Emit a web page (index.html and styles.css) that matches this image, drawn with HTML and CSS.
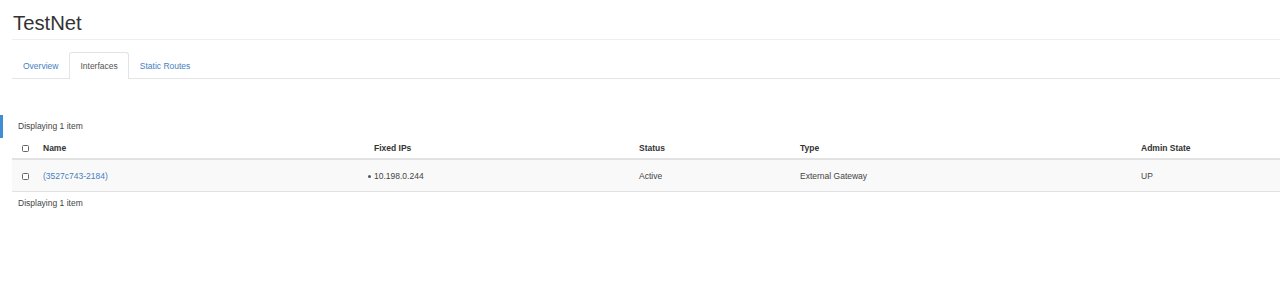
FILE: index.html
```html
<!DOCTYPE html>
<html>
<head>
<meta charset="utf-8">
<title>TestNet</title>
<link rel="stylesheet" href="styles.css">
</head>
<body>
<div class="side-marker"></div>
<div class="page">
  <div class="page-header">
    <h1 class="title">TestNet</h1>
  </div>
  <ul class="tabs">
    <li class="tab"><a href="#">Overview</a></li>
    <li class="tab active"><a href="#">Interfaces</a></li>
    <li class="tab"><a href="#">Static Routes</a></li>
  </ul>
  <div class="content">
    <div class="count">Displaying 1 item</div>
    <table class="grid">
      <colgroup>
        <col class="c-check"><col class="c-name"><col class="c-ips"><col class="c-status"><col class="c-type"><col class="c-admin">
      </colgroup>
      <thead>
        <tr>
          <th class="check"><span class="box"></span></th>
          <th>Name</th>
          <th>Fixed IPs</th>
          <th>Status</th>
          <th>Type</th>
          <th>Admin State</th>
        </tr>
      </thead>
      <tbody>
        <tr>
          <td class="check"><span class="box"></span></td>
          <td><a class="link" href="#">(3527c743-2184)</a></td>
          <td><ul class="ips"><li>10.198.0.244</li></ul></td>
          <td class="plain">Active</td>
          <td class="plain">External Gateway</td>
          <td class="plain">UP</td>
        </tr>
      </tbody>
    </table>
    <div class="count foot">Displaying 1 item</div>
  </div>
</div>
</body>
</html>
```

FILE: styles.css
```css
html, body {
  margin: 0;
  padding: 0;
  background: #fff;
}
body {
  font-family: "Liberation Sans", Arial, sans-serif;
  font-size: 8.5px;
  color: #3a3a3a;
  position: relative;
  height: 297px;
  overflow: hidden;
}
.side-marker {
  position: absolute;
  left: 0;
  top: 115px;
  width: 3px;
  height: 23px;
  background: #3f8dd3;
}
.page {
  padding-left: 12px;
}
.page-header {
  padding-top: 12px;
  padding-bottom: 5px;
  border-bottom: 1px solid #efefef;
}
.title {
  margin: 0;
  padding-left: 1px;
  font-size: 20.3px;
  line-height: 22px;
  font-weight: normal;
  color: #333;
}
.tabs {
  list-style: none;
  margin: 12px 0 0 0;
  padding: 0;
  display: flex;
  border-bottom: 1px solid #e5e5e5;
  height: 26px;
}
.tab {
  margin-bottom: -1px;
}
.tab a {
  display: block;
  height: 25px;
  line-height: 26px;
  padding: 0 10px;
  border: 1px solid transparent;
  border-bottom: 0;
  border-radius: 3px 3px 0 0;
  color: #4680c0;
  text-decoration: none;
}
.tab.active a {
  color: #555;
  background: #fff;
  border-color: #e3e3e3;
  height: 26px;
}
.content {
  padding-top: 41px;
}
.count {
  padding-left: 6px;
  line-height: 12px;
  height: 12px;
  color: #444;
}
.grid {
  width: 100%;
  border-collapse: collapse;
  table-layout: fixed;
}
.c-check { width: 23px; }
.c-name { width: 331px; }
.c-ips { width: 265px; }
.c-status { width: 161px; }
.c-type { width: 341px; }
.c-admin { width: 147px; }
.grid th {
  text-align: left;
  font-weight: bold;
  padding: 10px 0 4px 8px;
  line-height: 12px;
  color: #333;
  border-bottom: 2px solid #e2e2e2;
}
.grid td {
  padding: 10px 0 9px 8px;
  line-height: 12px;
  background: #f9f9f9;
  border-bottom: 1px solid #e2e2e2;
  vertical-align: middle;
  color: #444;
}
.grid td.plain {
  color: #444;
}
.grid .check {
  padding-left: 10px;
}
.box {
  display: inline-block;
  width: 5px;
  height: 5px;
  border: 1px solid #666;
  border-radius: 1.5px;
  vertical-align: middle;
  background: #fff;
}
.link {
  color: #4680c0;
  text-decoration: none;
}
.ips {
  margin: 0;
  padding: 0;
  list-style: none;
}
.ips li {
  margin: 0;
  position: relative;
}
.ips li::before {
  content: "";
  position: absolute;
  left: -6px;
  top: 5px;
  width: 3px;
  height: 3px;
  border-radius: 50%;
  background: #555;
}
.foot {
  margin-top: 5px;
}
```
